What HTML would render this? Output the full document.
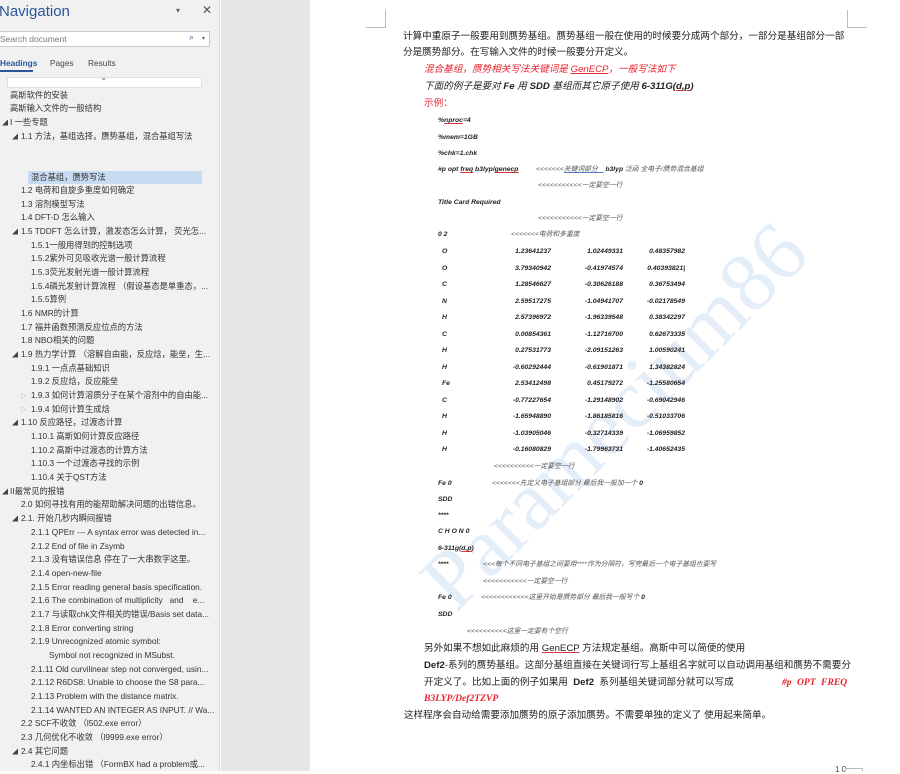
<!DOCTYPE html>
<html><head><meta charset="utf-8">
<style>
*{margin:0;padding:0;box-sizing:border-box}
body{width:900px;height:771px;overflow:hidden;position:relative;background:#fff;font-family:"Liberation Sans","Noto Sans CJK SC",sans-serif}
#nav{position:absolute;left:0;top:0;width:220px;height:771px;background:#f1f1f1;border-right:1px solid #d8d8d8}
#gap{position:absolute;left:221px;top:0;width:89px;height:771px;background:#e6e6e6}
#page{position:absolute;left:310px;top:0;width:590px;height:771px;background:#fff;overflow:hidden}
.n{position:absolute;font-size:8.3px;color:#333;white-space:nowrap;line-height:12px;height:12px}
.ar{position:absolute;font-size:6px;color:#444}
.t{position:absolute;white-space:nowrap;color:#222}
.b{font-size:9.6px;line-height:14px}
.c{font-size:6.8px;font-style:italic;font-weight:bold;color:#222;line-height:9px}
.cc{font-weight:normal;color:#555}
.r{color:#e8212a}
.num{position:absolute;font-size:6.8px;font-style:italic;font-weight:bold;color:#222;text-align:right;width:80px;line-height:9px}
u{text-decoration:underline;text-decoration-color:#d33}
</style></head><body>
<div id="nav">
 <div style="position:absolute;left:-1px;top:3px;font-size:15px;color:#2b579a">Navigation</div>
 <div style="position:absolute;left:176px;top:6px;font-size:8px;color:#666">▾</div>
 <div style="position:absolute;left:202px;top:3px;font-size:12px;color:#555">✕</div>
 <div style="position:absolute;left:-1px;top:31px;width:211px;height:16px;background:#fff;border:1px solid #c8c8c8"></div>
 <div style="position:absolute;left:0;top:34px;font-size:8.5px;color:#777">Search document</div>
 <div style="position:absolute;left:189px;top:32px;font-size:9px;color:#2b579a">⌕</div>
 <div style="position:absolute;left:202px;top:35px;font-size:6px;color:#666">▾</div>
 <div style="position:absolute;left:0;top:58px;font-size:8.3px;color:#2b579a;font-weight:bold">Headings</div>
 <div style="position:absolute;left:0;top:70px;width:33px;height:2px;background:#2b579a"></div>
 <div style="position:absolute;left:50px;top:58px;font-size:8.3px;color:#444">Pages</div>
 <div style="position:absolute;left:88px;top:58px;font-size:8.3px;color:#444">Results</div>
 <div style="position:absolute;left:7px;top:77px;width:195px;height:11px;background:#fff;border:1px solid #e0e0e0"></div>
 <div style="position:absolute;left:102px;top:77px;font-size:6px;color:#555">=</div>
 <div style="position:absolute;left:28px;top:171px;width:174px;height:13px;background:#c7dcf2"></div>
 <div class="n" style="left:10px;top:89px">高斯软件的安装</div>
 <div class="n" style="left:10px;top:102px">高斯输入文件的一般结构</div>
 <div class="ar" style="left:2px;top:118px">◢</div><div class="n" style="left:10px;top:116px">I 一些专题</div>
 <div class="ar" style="left:12px;top:132px">◢</div><div class="n" style="left:21px;top:130px">1.1 方法，基组选择，赝势基组，混合基组写法</div>
 <div class="n" style="left:31px;top:171px">混合基组，赝势写法</div>
 <div class="n" style="left:21px;top:184px">1.2 电荷和自旋多重度如何确定</div>
 <div class="n" style="left:21px;top:198px">1.3 溶剂模型写法</div>
 <div class="n" style="left:21px;top:211px">1.4 DFT-D 怎么输入</div>
 <div class="ar" style="left:12px;top:227px">◢</div><div class="n" style="left:21px;top:225px">1.5 TDDFT 怎么计算，激发态怎么计算， 荧光怎...</div>
 <div class="n" style="left:31px;top:239px">1.5.1一般用得到的控制选项</div>
 <div class="n" style="left:31px;top:252px">1.5.2紫外可见吸收光谱一般计算流程</div>
 <div class="n" style="left:31px;top:266px">1.5.3荧光发射光谱一般计算流程</div>
 <div class="n" style="left:31px;top:280px">1.5.4磷光发射计算流程 （假设基态是单重态，...</div>
 <div class="n" style="left:31px;top:293px">1.5.5算例</div>
 <div class="n" style="left:21px;top:307px">1.6 NMR的计算</div>
 <div class="n" style="left:21px;top:321px">1.7 福井函数预测反应位点的方法</div>
 <div class="n" style="left:21px;top:334px">1.8 NBO相关的问题</div>
 <div class="ar" style="left:12px;top:350px">◢</div><div class="n" style="left:21px;top:348px">1.9 热力学计算 （溶解自由能，反应焓，能垒，生...</div>
 <div class="n" style="left:31px;top:362px">1.9.1 一点点基础知识</div>
 <div class="n" style="left:31px;top:375px">1.9.2 反应焓，反应能垒</div>
 <div class="ar" style="left:21px;top:391px;color:#999">▷</div><div class="n" style="left:31px;top:389px">1.9.3 如何计算溶质分子在某个溶剂中的自由能...</div>
 <div class="ar" style="left:21px;top:405px;color:#999">▷</div><div class="n" style="left:31px;top:403px">1.9.4 如何计算生成焓</div>
 <div class="ar" style="left:12px;top:418px">◢</div><div class="n" style="left:21px;top:416px">1.10 反应路径，过渡态计算</div>
 <div class="n" style="left:31px;top:430px">1.10.1 高斯如何计算反应路径</div>
 <div class="n" style="left:31px;top:444px">1.10.2 高斯中过渡态的计算方法</div>
 <div class="n" style="left:31px;top:457px">1.10.3 一个过渡态寻找的示例</div>
 <div class="n" style="left:31px;top:471px">1.10.4 关于QST方法</div>
 <div class="ar" style="left:2px;top:487px">◢</div><div class="n" style="left:10px;top:485px">II最常见的报错</div>
 <div class="n" style="left:21px;top:498px">2.0 如何寻找有用的能帮助解决问题的出错信息。</div>
 <div class="ar" style="left:12px;top:514px">◢</div><div class="n" style="left:21px;top:512px">2.1. 开始几秒内瞬间报错</div>
 <div class="n" style="left:31px;top:526px">2.1.1 QPErr --- A syntax error was detected in...</div>
 <div class="n" style="left:31px;top:540px">2.1.2 End of file in Zsymb</div>
 <div class="n" style="left:31px;top:553px">2.1.3 没有错误信息 停在了一大串数字这里。</div>
 <div class="n" style="left:31px;top:567px">2.1.4 open-new-file</div>
 <div class="n" style="left:31px;top:581px">2.1.5 Error reading general basis specification.</div>
 <div class="n" style="left:31px;top:594px">2.1.6 The combination of multiplicity &nbsp; and &nbsp;&nbsp; e...</div>
 <div class="n" style="left:31px;top:608px">2.1.7 与读取chk文件相关的错误/Basis set data...</div>
 <div class="n" style="left:31px;top:622px">2.1.8 Error converting string</div>
 <div class="n" style="left:31px;top:635px">2.1.9 Unrecognized atomic symbol:</div>
 <div class="n" style="left:49px;top:649px">Symbol not recognized in MSubst.</div>
 <div class="n" style="left:31px;top:663px">2.1.11 Old curvilinear step not converged, usin...</div>
 <div class="n" style="left:31px;top:676px">2.1.12 R6DS8: Unable to choose the S8 para...</div>
 <div class="n" style="left:31px;top:690px">2.1.13 Problem with the distance matrix.</div>
 <div class="n" style="left:31px;top:704px">2.1.14 WANTED AN INTEGER AS INPUT. // Wa...</div>
 <div class="n" style="left:21px;top:717px">2.2 SCF不收敛 （l502.exe error）</div>
 <div class="n" style="left:21px;top:731px">2.3 几何优化不收敛 （l9999.exe error）</div>
 <div class="ar" style="left:12px;top:747px">◢</div><div class="n" style="left:21px;top:745px">2.4 其它问题</div>
 <div class="n" style="left:31px;top:758px">2.4.1 内坐标出错 （FormBX had a problem或...</div>
</div>
<div id="gap"></div>
<div id="page">
 <div style="position:absolute;left:56px;top:10px;width:20px;height:18px;border-right:1px solid #bbb;border-bottom:1px solid #bbb"></div>
 <div style="position:absolute;left:537px;top:10px;width:20px;height:18px;border-left:1px solid #bbb;border-bottom:1px solid #bbb"></div>
 <div style="position:absolute;left:92px;top:560px;transform:rotate(-45deg);transform-origin:left top;font-family:'Liberation Serif',serif;font-size:84px;color:#e4eef9;white-space:nowrap">Paramecium86</div>
</div>
<div style="position:absolute;left:0;top:0">
 <div class="t b" style="left:403px;top:30px">计算中重原子一般要用到赝势基组。赝势基组一般在使用的时候要分成两个部分，一部分是基组部分一部</div>
 <div class="t b" style="left:403px;top:46px">分是赝势部分。在写输入文件的时候一般要分开定义。</div>
 <div class="t b r" style="left:424px;top:63px;font-style:italic">混合基组，赝势相关写法关键词是 <u>GenECP</u>，一般写法如下</div>
 <div class="t b" style="left:424px;top:80px;font-style:italic">下面的例子是要对 <b>Fe</b> 用 <b>SDD</b> 基组而其它原子使用 <b>6-311G(<u>d,p</u>)</b></div>
 <div class="t b r" style="left:424px;top:97px">示例：</div>
 <div class="t c" style="left:438px;top:116px">%<u>nproc</u>=4</div>
 <div class="t c" style="left:438px;top:133px">%mem=1GB</div>
 <div class="t c" style="left:438px;top:149px">%chk=1.chk</div>
 <div class="t c" style="left:438px;top:165px">#p opt <u>freq</u> b3lyp/<u>genecp</u></div>
 <div class="t c" style="left:536px;top:165px"><span class="cc">&lt;&lt;&lt;&lt;&lt;&lt;&lt;<span style="text-decoration:underline;text-decoration-color:#4a7cc9">关键词部分&nbsp;&nbsp;&nbsp;</span></span> b3lyp <span class="cc">泛函 全电子/赝势混合基组</span></div>
 <div class="t c cc" style="left:538px;top:181px">&lt;&lt;&lt;&lt;&lt;&lt;&lt;&lt;&lt;&lt;&lt;一定要空一行</div>
 <div class="t c" style="left:438px;top:198px">Title Card Required</div>
 <div class="t c cc" style="left:538px;top:214px">&lt;&lt;&lt;&lt;&lt;&lt;&lt;&lt;&lt;&lt;&lt;一定要空一行</div>
 <div class="t c" style="left:438px;top:230px">0 2</div>
 <div class="t c cc" style="left:511px;top:230px">&lt;&lt;&lt;&lt;&lt;&lt;&lt;电荷和多重度</div>
 <div class="t c cc" style="left:494px;top:462px">&lt;&lt;&lt;&lt;&lt;&lt;&lt;&lt;&lt;&lt;一定要空一行</div>
 <div class="t c" style="left:438px;top:479px">Fe 0</div>
 <div class="t c cc" style="left:492px;top:479px">&lt;&lt;&lt;&lt;&lt;&lt;&lt;先定义电子基组部分 最后我一般加一个 <b style="color:#222">0</b></div>
 <div class="t c" style="left:438px;top:495px">SDD</div>
 <div class="t c" style="left:438px;top:511px">****</div>
 <div class="t c" style="left:438px;top:527px">C H O N 0</div>
 <div class="t c" style="left:438px;top:544px">6-311g(<u>d,p</u>)</div>
 <div class="t c" style="left:438px;top:560px">****</div>
 <div class="t c cc" style="left:483px;top:560px">&lt;&lt;&lt;每个不同电子基组之间要用****作为分隔符，写完最后一个电子基组也要写</div>
 <div class="t c cc" style="left:483px;top:577px">&lt;&lt;&lt;&lt;&lt;&lt;&lt;&lt;&lt;&lt;&lt;一定要空一行</div>
 <div class="t c" style="left:438px;top:593px">Fe 0</div>
 <div class="t c cc" style="left:481px;top:593px">&lt;&lt;&lt;&lt;&lt;&lt;&lt;&lt;&lt;&lt;&lt;&lt;这里开始是赝势部分 最后我一般写个 <b style="color:#222">0</b></div>
 <div class="t c" style="left:438px;top:610px">SDD</div>
 <div class="t c cc" style="left:467px;top:627px">&lt;&lt;&lt;&lt;&lt;&lt;&lt;&lt;&lt;&lt;这里一定要有个空行</div>
 <div class="t b" style="left:424px;top:642px">另外如果不想如此麻烦的用 <u>GenECP</u> 方法规定基组。高斯中可以简便的使用</div>
 <div class="t b" style="left:424px;top:659px"><b>Def2</b>-系列的赝势基组。这部分基组直接在关键词行写上基组名字就可以自动调用基组和赝势不需要分</div>
 <div class="t b" style="left:424px;top:676px">开定义了。比如上面的例子如果用 &nbsp;<b>Def2</b>&nbsp; 系列基组关键词部分就可以写成</div>
 <div class="t b r" style="left:782px;top:676px;font-style:italic;font-weight:bold;font-family:'Liberation Serif',serif;word-spacing:3px">#p OPT FREQ</div>
 <div class="t b r" style="left:424px;top:692px;font-style:italic;font-weight:bold;font-family:'Liberation Serif',serif">B3LYP/Def2TZVP</div>
 <div class="t b" style="left:404px;top:709px">这样程序会自动给需要添加赝势的原子添加赝势。不需要单独的定义了 使用起来简单。</div>
 <div class="t" style="left:835px;top:765px;font-size:8px;color:#444">1 0</div>
 <div style="position:absolute;left:845px;top:768px;width:18px;height:3px;border:1px solid #bbb;border-bottom:none"></div>
</div>
<div style="position:absolute;left:0;top:0">
 <div class="t c" style="left:442px;top:247px">O</div><div class="num" style="left:471px;top:247px">1.23641237</div><div class="num" style="left:543px;top:247px">1.02449331</div><div class="num" style="left:605px;top:247px">0.48357982</div>
 <div class="t c" style="left:442px;top:264px">O</div><div class="num" style="left:471px;top:264px">3.79340942</div><div class="num" style="left:543px;top:264px">-0.41974574</div><div class="num" style="left:605px;top:264px">0.40393821|</div>
 <div class="t c" style="left:442px;top:280px">C</div><div class="num" style="left:471px;top:280px">1.28546627</div><div class="num" style="left:543px;top:280px">-0.30626188</div><div class="num" style="left:605px;top:280px">0.36753494</div>
 <div class="t c" style="left:442px;top:297px">N</div><div class="num" style="left:471px;top:297px">2.59517275</div><div class="num" style="left:543px;top:297px">-1.04941707</div><div class="num" style="left:605px;top:297px">-0.02178549</div>
 <div class="t c" style="left:442px;top:313px">H</div><div class="num" style="left:471px;top:313px">2.57396972</div><div class="num" style="left:543px;top:313px">-1.96339548</div><div class="num" style="left:605px;top:313px">0.38342297</div>
 <div class="t c" style="left:442px;top:330px">C</div><div class="num" style="left:471px;top:330px">0.00854361</div><div class="num" style="left:543px;top:330px">-1.12716700</div><div class="num" style="left:605px;top:330px">0.62673335</div>
 <div class="t c" style="left:442px;top:346px">H</div><div class="num" style="left:471px;top:346px">0.27531773</div><div class="num" style="left:543px;top:346px">-2.09151263</div><div class="num" style="left:605px;top:346px">1.00590241</div>
 <div class="t c" style="left:442px;top:363px">H</div><div class="num" style="left:471px;top:363px">-0.60292444</div><div class="num" style="left:543px;top:363px">-0.61901871</div><div class="num" style="left:605px;top:363px">1.34382824</div>
 <div class="t c" style="left:442px;top:379px">Fe</div><div class="num" style="left:471px;top:379px">2.53412498</div><div class="num" style="left:543px;top:379px">0.45179272</div><div class="num" style="left:605px;top:379px">-1.25580654</div>
 <div class="t c" style="left:442px;top:396px">C</div><div class="num" style="left:471px;top:396px">-0.77227654</div><div class="num" style="left:543px;top:396px">-1.29148902</div><div class="num" style="left:605px;top:396px">-0.69042946</div>
 <div class="t c" style="left:442px;top:412px">H</div><div class="num" style="left:471px;top:412px">-1.65948890</div><div class="num" style="left:543px;top:412px">-1.86185816</div><div class="num" style="left:605px;top:412px">-0.51033706</div>
 <div class="t c" style="left:442px;top:429px">H</div><div class="num" style="left:471px;top:429px">-1.03905046</div><div class="num" style="left:543px;top:429px">-0.32714339</div><div class="num" style="left:605px;top:429px">-1.06959852</div>
 <div class="t c" style="left:442px;top:445px">H</div><div class="num" style="left:471px;top:445px">-0.16080829</div><div class="num" style="left:543px;top:445px">-1.79963731</div><div class="num" style="left:605px;top:445px">-1.40652435</div>
</div>
</body></html>
